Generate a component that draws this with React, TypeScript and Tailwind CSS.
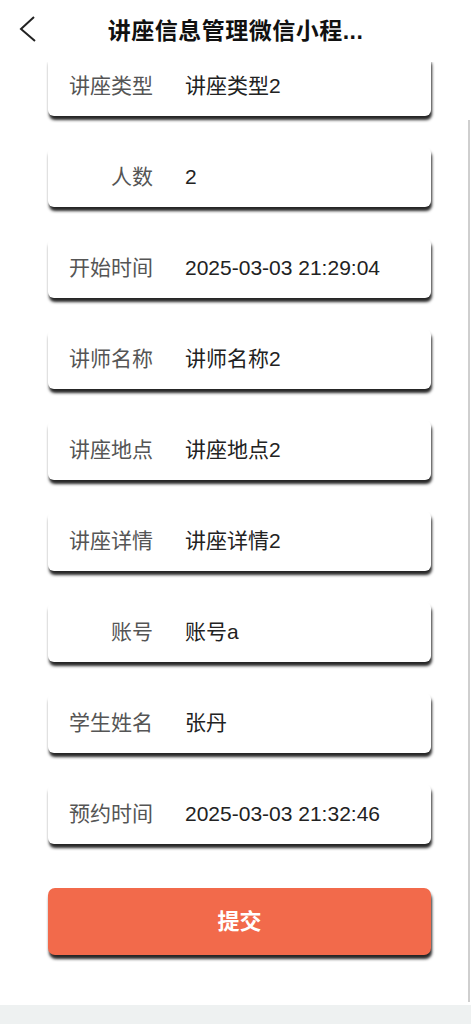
import React from 'react';

const ROWS: { label: string; value: string }[] = [
  { label: '讲座类型', value: '讲座类型2' },
  { label: '人数', value: '2' },
  { label: '开始时间', value: '2025-03-03 21:29:04' },
  { label: '讲师名称', value: '讲师名称2' },
  { label: '讲座地点', value: '讲座地点2' },
  { label: '讲座详情', value: '讲座详情2' },
  { label: '账号', value: '账号a' },
  { label: '学生姓名', value: '张丹' },
  { label: '预约时间', value: '2025-03-03 21:32:46' },
];

const FONT = "font-['Liberation_Sans','Noto_Sans_CJK_SC',sans-serif]";

const Field: React.FC<{ label: string; value: string }> = ({ label, value }) => (
  <div className="h-[60px] flex items-center bg-white rounded-[6px] shadow-[1px_4px_3px_rgba(0,0,0,0.85)]">
    <div className="w-[105px] text-right text-[21px] text-[#555]">{label}</div>
    <div className="ml-[32px] text-[21px] text-[#222]">{value}</div>
  </div>
);

const App: React.FC = () => {
  return (
    <div className={`relative h-[1024px] w-full bg-white flex flex-col overflow-hidden ${FONT}`}>
      <header className="relative z-10 h-[62px] shrink-0 bg-white flex items-center justify-center">
        <svg
          className="absolute left-[16px] top-[13px]"
          width="24"
          height="34"
          viewBox="16 13 24 34"
          fill="none"
          stroke="#222"
          strokeWidth="2"
        >
          <polyline points="34,17 21,29 35,41" />
        </svg>
        <h1 className="text-[23px] font-bold text-[#111] tracking-[0.5px]">讲座信息管理微信小程...</h1>
      </header>

      <main className="-mt-[6px] pl-[48px] pr-[40px]">
        <div className="flex flex-col gap-[31px]">
          {ROWS.map((row, i) => (
            <Field key={i} label={row.label} value={row.value} />
          ))}
        </div>
        <button className="mt-[44px] w-full h-[67px] rounded-[7px] bg-[#f26a4b] text-white text-[22px] font-bold shadow-[1px_4px_3px_rgba(0,0,0,0.85)]">
          提交
        </button>
      </main>

      <div className="absolute right-[1px] top-[120px] w-[2px] h-[882px] bg-[#cfcfcf]" />
      <div className="mt-auto h-[19px] bg-[#eef1f1]" />
    </div>
  );
};

export default App;
